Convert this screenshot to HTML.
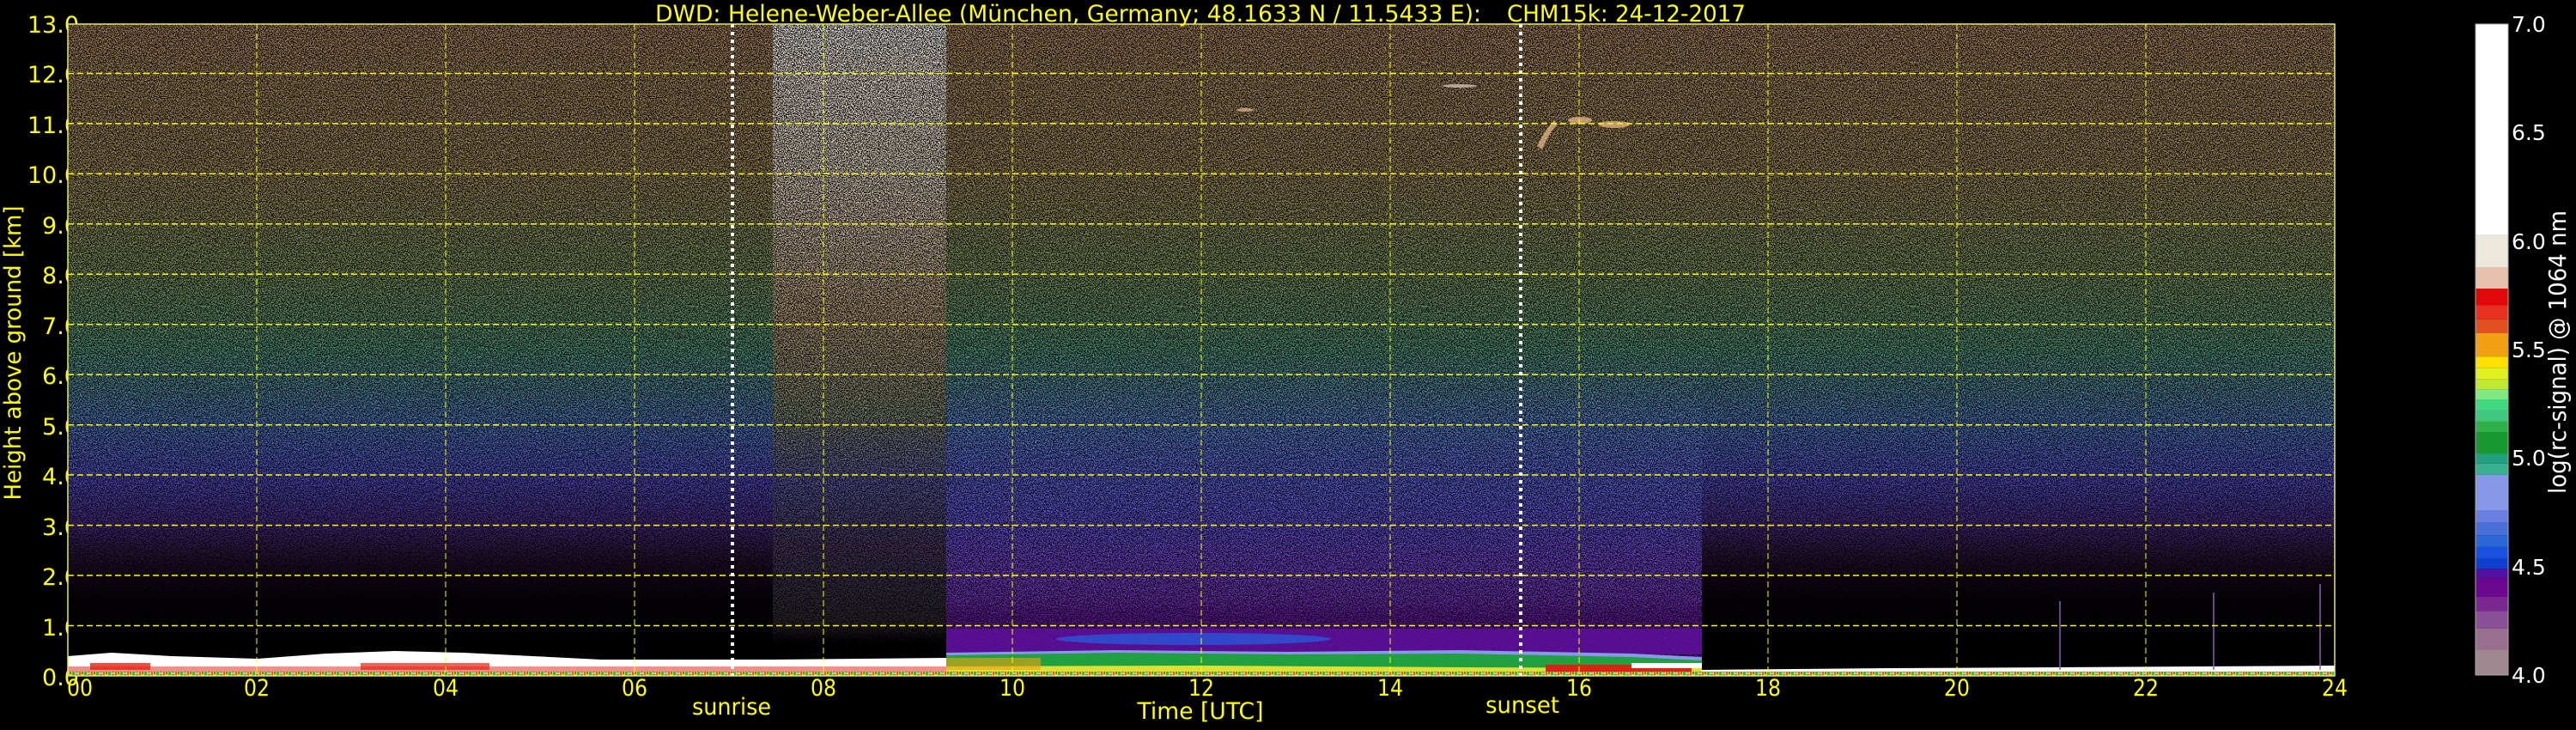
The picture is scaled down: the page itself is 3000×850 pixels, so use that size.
<!DOCTYPE html>
<html><head><meta charset="utf-8"><style>
html,body{margin:0;padding:0;background:#000;}
svg{display:block;}
text{font-family:"DejaVu Sans","Liberation Sans",sans-serif;fill:#ffff00;}
</style></head><body>
<svg width="3000" height="850" viewBox="0 0 3000 850" xmlns="http://www.w3.org/2000/svg">
<defs>
<linearGradient id="gNight" x1="0" y1="0" x2="0" y2="1">
<stop offset="0" stop-color="#a8825a"/><stop offset="0.229" stop-color="#9c8854"/>
<stop offset="0.383" stop-color="#7a9058"/><stop offset="0.5" stop-color="#50967a"/>
<stop offset="0.616" stop-color="#4c78bc"/><stop offset="0.693" stop-color="#5450c8"/>
<stop offset="0.77" stop-color="#4a2a84"/><stop offset="0.83" stop-color="#22102a"/>
<stop offset="0.884" stop-color="#060306"/><stop offset="1" stop-color="#000"/>
</linearGradient>
<linearGradient id="gDay" x1="0" y1="0" x2="0" y2="1">
<stop offset="0" stop-color="#a8825a"/><stop offset="0.229" stop-color="#9c8854"/>
<stop offset="0.383" stop-color="#7a9058"/><stop offset="0.5" stop-color="#50967a"/>
<stop offset="0.616" stop-color="#5480c8"/><stop offset="0.693" stop-color="#5c64d8"/>
<stop offset="0.77" stop-color="#6450d8"/><stop offset="0.846" stop-color="#7440cc"/>
<stop offset="0.884" stop-color="#7430bc"/><stop offset="0.908" stop-color="#6a18a8"/>
<stop offset="1" stop-color="#6010a0"/>
</linearGradient>
<linearGradient id="gCol" x1="0" y1="0" x2="0" y2="1">
<stop offset="0" stop-color="#f0ebe4"/><stop offset="0.25" stop-color="#d8cab4"/>
<stop offset="0.45" stop-color="#b09a70"/><stop offset="0.6" stop-color="#7c8470"/>
<stop offset="0.7" stop-color="#5a5aa0"/><stop offset="0.8" stop-color="#4a3a64"/>
<stop offset="0.88" stop-color="#383040"/><stop offset="0.92" stop-color="#302830"/>
<stop offset="0.95" stop-color="#000"/><stop offset="1" stop-color="#000"/>
</linearGradient>
<filter id="sp" x="0" y="0" width="1" height="1">
<feTurbulence type="fractalNoise" baseFrequency="0.9" numOctaves="2" seed="7"/>
<feColorMatrix type="matrix" values="0 0 0 0 0  0 0 0 0 0  0 0 0 0 0  -9 0 0 0 5"/>
</filter>
<pattern id="strip" width="14" height="5" patternUnits="userSpaceOnUse">
<rect width="14" height="5" fill="#e8d030"/><rect x="0" width="3" height="5" fill="#40b060"/>
<rect x="4" width="3" height="3" fill="#5080e0"/><rect x="8" width="2" height="5" fill="#e06020"/>
<rect x="11" y="2" width="2" height="3" fill="#30a040"/>
</pattern>
<clipPath id="pc"><rect x="79" y="28" width="2640" height="759"/></clipPath>
</defs>

<g font-size="27" text-anchor="end">
<text x="92" y="38">13.0</text><text x="92" y="96">12.0</text><text x="92" y="155">11.0</text>
<text x="92" y="213">10.0</text><text x="92" y="272">9.0</text><text x="92" y="330">8.0</text>
<text x="92" y="389">7.0</text><text x="92" y="447">6.0</text><text x="92" y="506">5.0</text>
<text x="92" y="564">4.0</text><text x="92" y="623">3.0</text><text x="92" y="681">2.0</text>
<text x="92" y="740">1.0</text><text x="92" y="798">0.0</text>
</g>

<g clip-path="url(#pc)">
<rect x="79" y="28" width="2640" height="759" fill="url(#gNight)"/>
<rect x="1102" y="28" width="880" height="759" fill="url(#gDay)"/>
<rect x="900" y="28" width="202" height="759" fill="url(#gCol)"/>
<rect x="79" y="28" width="2640" height="759" fill="#000" filter="url(#sp)"/>
<!-- daytime boundary layer -->
<rect x="1102" y="732" width="880" height="30" fill="#6010a0" opacity="0.8"/>
<ellipse cx="1390" cy="744" rx="160" ry="7" fill="#2858d8" opacity="0.8"/>
<path d="M1102 760 L1300 757 L1500 759 L1700 757 L1900 761 L1982 765 L1982 787 L1102 787Z" fill="#8898e8"/>
<path d="M1102 763 L1300 760 L1500 762 L1700 761 L1900 765 L1982 769 L1982 787 L1102 787Z" fill="#20a040"/>
<path d="M1102 776 L1400 775 L1700 777 L1982 778 L1982 787 L1102 787Z" fill="#e0e030"/>
<rect x="1102" y="766" width="110" height="14" fill="#f0a010" opacity="0.6"/>
<rect x="1800" y="774" width="170" height="8" fill="#e02010"/>
<rect x="1900" y="772" width="82" height="6" fill="#fff"/>
<!-- night lower layer -->
<path d="M79 764 L130 760 L200 764 L300 767 L380 761 L460 758 L540 760 L620 764 L700 768 L900 768 L1102 766 L1102 787 L79 787Z" fill="#fff"/>
<rect x="79" y="776" width="1023" height="6" fill="#e82010" opacity="0.5"/>
<rect x="105" y="772" width="70" height="8" fill="#e82010" opacity="0.8"/>
<rect x="420" y="772" width="150" height="8" fill="#e82010" opacity="0.7"/>
<path d="M1982 780 L2200 778 L2400 777 L2719 775 L2719 787 L1982 787Z" fill="#fff"/>
<rect x="79" y="782" width="2640" height="5" fill="url(#strip)"/>
<g stroke="#8a5ac0" stroke-width="1.5"><line x1="2399" y1="700" x2="2399" y2="780"/><line x1="2578" y1="690" x2="2578" y2="780"/><line x1="2702" y1="680" x2="2702" y2="780"/></g>
<g fill="#f0c090" opacity="0.7"><path d="M1790 170 q10-20 20-30 l4 4 q-12 14-18 30z"/><ellipse cx="1840" cy="140" rx="14" ry="4"/><ellipse cx="1880" cy="145" rx="18" ry="4"/><ellipse cx="1700" cy="100" rx="20" ry="2" fill="#e0d0c0"/><ellipse cx="1450" cy="128" rx="10" ry="2"/></g>
<g stroke="#ffff00" stroke-width="1.5" stroke-dasharray="7 4">
<line x1="79" y1="728.5" x2="2719" y2="728.5"/><line x1="79" y1="670" x2="2719" y2="670"/>
<line x1="79" y1="611.6" x2="2719" y2="611.6"/><line x1="79" y1="553" x2="2719" y2="553"/>
<line x1="79" y1="494.7" x2="2719" y2="494.7"/><line x1="79" y1="436.2" x2="2719" y2="436.2"/>
<line x1="79" y1="377.8" x2="2719" y2="377.8"/><line x1="79" y1="319.3" x2="2719" y2="319.3"/>
<line x1="79" y1="260.8" x2="2719" y2="260.8"/><line x1="79" y1="202.4" x2="2719" y2="202.4"/>
<line x1="79" y1="143.9" x2="2719" y2="143.9"/><line x1="79" y1="85.5" x2="2719" y2="85.5"/>
</g>
<g stroke="#ffff00" stroke-width="1" stroke-dasharray="7 4">
<line x1="299" y1="28" x2="299" y2="787"/><line x1="519" y1="28" x2="519" y2="787"/>
<line x1="739" y1="28" x2="739" y2="787"/><line x1="959" y1="28" x2="959" y2="787"/>
<line x1="1179" y1="28" x2="1179" y2="787"/><line x1="1399" y1="28" x2="1399" y2="787"/>
<line x1="1619" y1="28" x2="1619" y2="787"/><line x1="1839" y1="28" x2="1839" y2="787"/>
<line x1="2059" y1="28" x2="2059" y2="787"/><line x1="2279" y1="28" x2="2279" y2="787"/>
<line x1="2499" y1="28" x2="2499" y2="787"/>
</g>
<g stroke="#fff" stroke-width="4" stroke-dasharray="4 5">
<line x1="853" y1="28" x2="853" y2="787"/><line x1="1771" y1="28" x2="1771" y2="787"/>
</g>
</g>
<rect x="79" y="28" width="2640" height="759" fill="none" stroke="#e8e860" stroke-width="1.5"/>

<text x="763" y="25" font-size="27" textLength="962" lengthAdjust="spacingAndGlyphs">DWD: Helene-Weber-Allee (München, Germany; 48.1633 N / 11.5433 E):</text>
<text x="1755" y="25" font-size="27" textLength="278" lengthAdjust="spacingAndGlyphs">CHM15k: 24-12-2017</text>

<g font-size="27" text-anchor="middle">
<text x="93" y="810" textLength="30" lengthAdjust="spacingAndGlyphs">00</text>
<text x="299" y="810" textLength="30" lengthAdjust="spacingAndGlyphs">02</text>
<text x="519" y="810" textLength="30" lengthAdjust="spacingAndGlyphs">04</text>
<text x="739" y="810" textLength="30" lengthAdjust="spacingAndGlyphs">06</text>
<text x="959" y="810" textLength="30" lengthAdjust="spacingAndGlyphs">08</text>
<text x="1179" y="810" textLength="30" lengthAdjust="spacingAndGlyphs">10</text>
<text x="1399" y="810" textLength="30" lengthAdjust="spacingAndGlyphs">12</text>
<text x="1619" y="810" textLength="30" lengthAdjust="spacingAndGlyphs">14</text>
<text x="1839" y="810" textLength="30" lengthAdjust="spacingAndGlyphs">16</text>
<text x="2059" y="810" textLength="30" lengthAdjust="spacingAndGlyphs">18</text>
<text x="2279" y="810" textLength="30" lengthAdjust="spacingAndGlyphs">20</text>
<text x="2499" y="810" textLength="30" lengthAdjust="spacingAndGlyphs">22</text>
<text x="2719" y="810" textLength="30" lengthAdjust="spacingAndGlyphs">24</text>
<text x="852" y="832" textLength="92" lengthAdjust="spacingAndGlyphs">sunrise</text>
<text x="1773" y="830" textLength="86" lengthAdjust="spacingAndGlyphs">sunset</text>
<text x="1398" y="837" textLength="147" lengthAdjust="spacingAndGlyphs">Time [UTC]</text>
</g>
<text transform="translate(24 411) rotate(-90)" font-size="27" text-anchor="middle" textLength="343" lengthAdjust="spacingAndGlyphs">Height above ground [km]</text>

<g>
<rect x="2883" y="28" width="38" height="245" fill="#fff"/>
<rect x="2883" y="273" width="38" height="38" fill="#ece8dc"/>
<rect x="2883" y="311" width="38" height="25" fill="#e8c0b0"/>
<rect x="2883" y="336" width="38" height="20" fill="#e00808"/>
<rect x="2883" y="355.6" width="38" height="16.2" fill="#e83020"/>
<rect x="2883" y="371.8" width="38" height="16.2" fill="#e05020"/>
<rect x="2883" y="388" width="38" height="27.2" fill="#f0a010"/>
<rect x="2883" y="415.2" width="38" height="13" fill="#ffe000"/>
<rect x="2883" y="428.2" width="38" height="13.5" fill="#e0f020"/>
<rect x="2883" y="441.7" width="38" height="11.4" fill="#c0e830"/>
<rect x="2883" y="453.1" width="38" height="11.9" fill="#80e880"/>
<rect x="2883" y="465" width="38" height="12" fill="#40d880"/>
<rect x="2883" y="477" width="38" height="13.5" fill="#40c880"/>
<rect x="2883" y="490.5" width="38" height="12.5" fill="#30b048"/>
<rect x="2883" y="503" width="38" height="25.5" fill="#189830"/>
<rect x="2883" y="528.5" width="38" height="11.3" fill="#20a080"/>
<rect x="2883" y="539.8" width="38" height="13" fill="#38b090"/>
<rect x="2883" y="552.8" width="38" height="41.2" fill="#8898e8"/>
<rect x="2883" y="594" width="38" height="14.7" fill="#6a80e0"/>
<rect x="2883" y="608.7" width="38" height="14.6" fill="#4870d8"/>
<rect x="2883" y="623.3" width="38" height="13.6" fill="#2a68d8"/>
<rect x="2883" y="636.9" width="38" height="13.5" fill="#1850e0"/>
<rect x="2883" y="650.4" width="38" height="11.9" fill="#1040d0"/>
<rect x="2883" y="662.3" width="38" height="10.9" fill="#5010a0"/>
<rect x="2883" y="673.2" width="38" height="21.7" fill="#6a0890"/>
<rect x="2883" y="694.9" width="38" height="16.7" fill="#7a2890"/>
<rect x="2883" y="711.6" width="38" height="20.1" fill="#8a5098"/>
<rect x="2883" y="731.7" width="38" height="24.4" fill="#9a7090"/>
<rect x="2883" y="756.1" width="38" height="29.9" fill="#a08890"/>
<rect x="2883" y="28" width="38" height="758" fill="none" stroke="#aaa" stroke-width="1"/>
</g>
<g font-size="25">
<text x="2925" y="37" style="fill:#fff">7.0</text>
<text x="2925" y="163" style="fill:#fff">6.5</text>
<text x="2925" y="290" style="fill:#fff">6.0</text>
<text x="2925" y="416" style="fill:#fff">5.5</text>
<text x="2925" y="542" style="fill:#fff">5.0</text>
<text x="2925" y="669" style="fill:#fff">4.5</text>
<text x="2925" y="795" style="fill:#fff">4.0</text>
</g>
<text transform="translate(2988 410) rotate(-90)" font-size="28" text-anchor="middle" textLength="330" lengthAdjust="spacingAndGlyphs" style="fill:#fff">log(rc-signal) @ 1064 nm</text>
</svg>
</body></html>
